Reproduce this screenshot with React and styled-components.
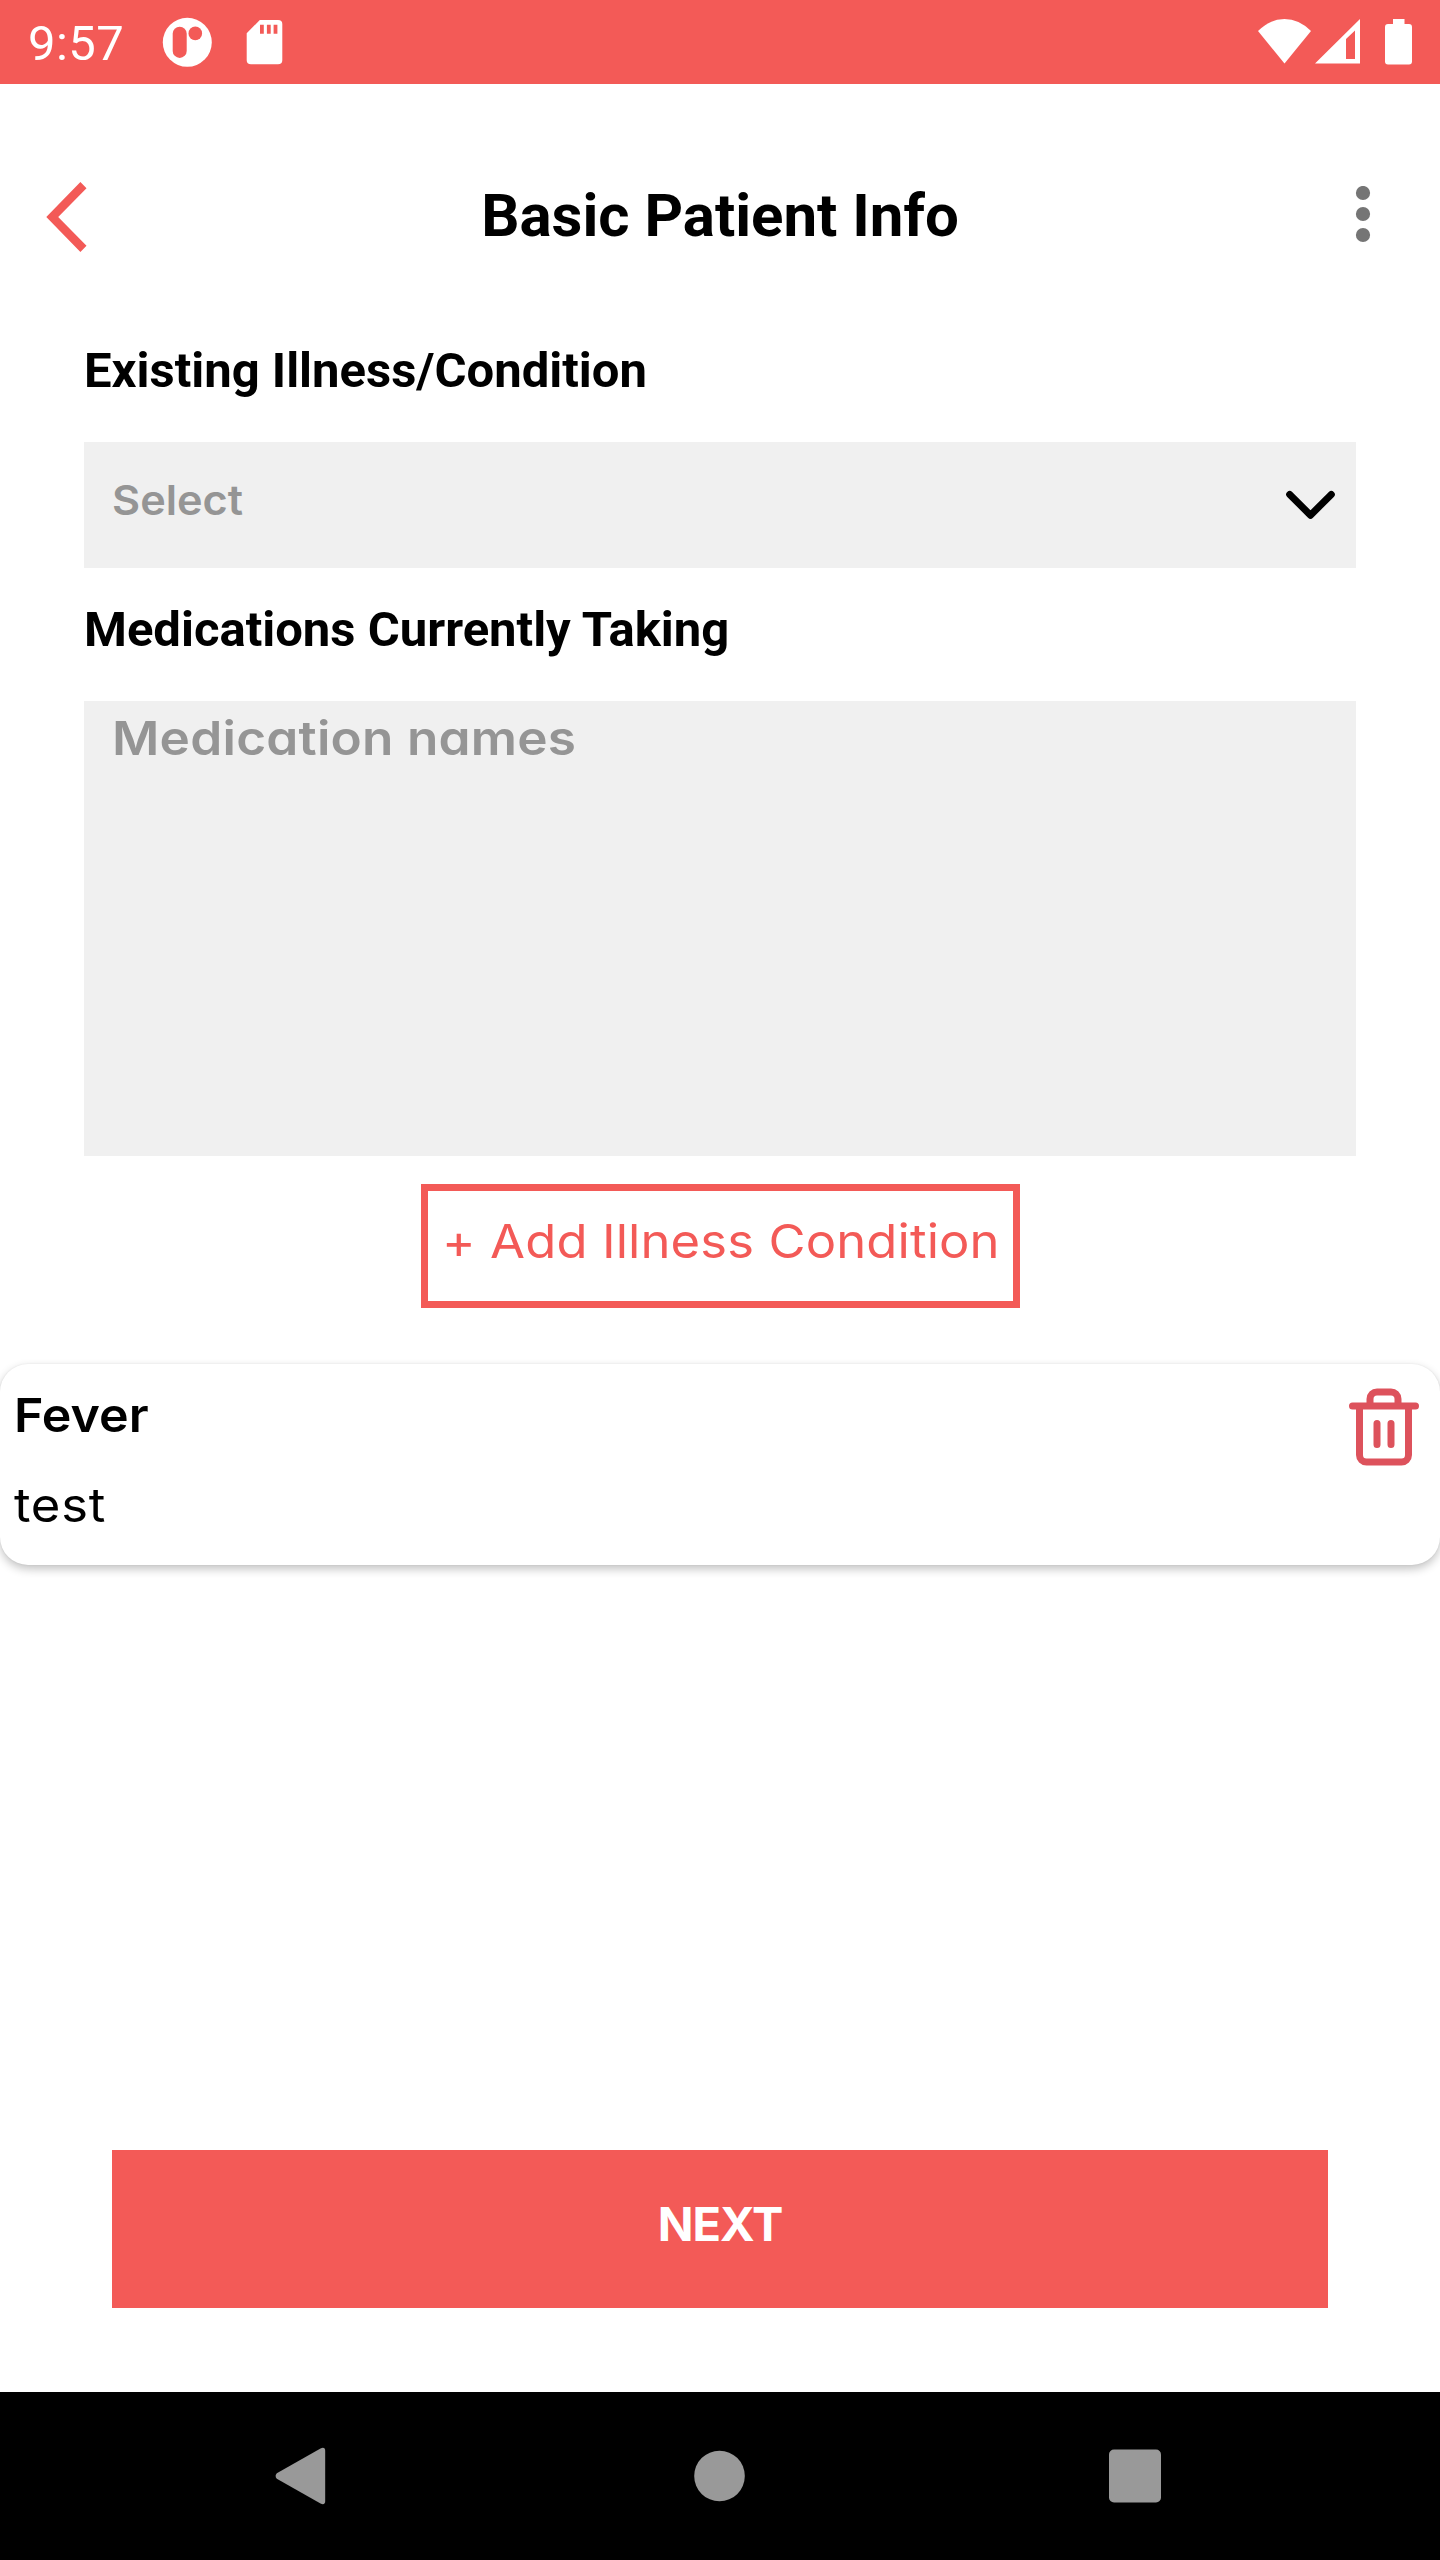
import React from "react";
import styled, { createGlobalStyle } from "styled-components";

const coral = "#f35a57";

const GlobalStyle = createGlobalStyle`
  *, *::before, *::after { box-sizing: border-box; }
  body { margin: 0; background: #fff; }
  button { font: inherit; color: inherit; background: none; border: 0; padding: 0; margin: 0; border-radius: 0; }
  svg { display: block; flex: none; }
`;

const Screen = styled.div`
  width: 1440px;
  height: 2560px;
  display: flex;
  flex-direction: column;
  overflow: hidden;
  background: #fff;
  color: #000;
  font-family: Inter, "Noto Sans", sans-serif;
  font-feature-settings: "cv11";
`;

const StatusBar = styled.div`
  height: 84px;
  flex: none;
  display: flex;
  justify-content: space-between;
  padding: 0 28px;
  background: ${coral};
  color: #fff;
`;

const StatusGroup = styled.div`
  display: flex;
`;

const Clock = styled.span`
  width: 134px;
  font: 400 49px/88px Roboto, sans-serif;
  letter-spacing: 0.4px;
`;

const StatusIcon = styled.svg`
  height: 84px;
  width: ${(p) => p.$width}px;
  margin-left: ${(p) => p.$gap || 0}px;
  fill: #fff;
`;

const Header = styled.header`
  height: 225px;
  flex: none;
  display: grid;
  grid-template-columns: 1fr auto 1fr;
  align-items: center;
  padding: 37px 69px 0 46px;
`;

const Title = styled.h1`
  margin: 2px 0 0 23px;
  font: 700 60px/72px Roboto, sans-serif;
`;

const MenuButton = styled.button`
  justify-self: end;
`;

const Form = styled.main`
  display: flex;
  flex-direction: column;
  padding: 0 84px;
`;

const Label = styled.label`
  padding: 29px 0 39px;
  font: 700 49px/65px Roboto, sans-serif;
`;

/* Widens the letterforms without changing their height. */
const WideText = styled.span`
  display: inline-block;
  transform: scaleX(${(p) => p.$stretch || 1.08});
  transform-origin: left center;
  letter-spacing: ${(p) => p.$spacing || 0}px;
  white-space: nowrap;
`;

const SelectField = styled.div`
  height: 126px;
  display: flex;
  justify-content: space-between;
  align-items: center;
  padding: 0 20px 0 28px;
  background: #f0f0f0;
`;

const SelectText = styled.span`
  padding-bottom: 10px;
  color: #959595;
  font-size: 41px;
  font-weight: 600;
  line-height: 60px;
`;

const TextArea = styled.div`
  height: 455px;
  padding: 2px 28px;
  background: #f0f0f0;
  color: #959595;
  font-size: 47px;
  font-weight: 600;
  line-height: 70px;
`;

const AddButton = styled.button`
  align-self: center;
  width: 599px;
  height: 124px;
  margin-top: 28px;
  padding: 0 0 10px 14px;
  border: 7px solid ${coral};
  color: ${coral};
  font-size: 47px;
  font-weight: 400;
  line-height: 100px;
  text-align: left;
  white-space: nowrap;
`;

const ConditionCard = styled.section`
  height: 201px;
  flex: none;
  display: flex;
  justify-content: space-between;
  align-items: flex-start;
  margin-top: 56px;
  padding: 14px;
  border-radius: 28px;
  background: #fff;
  box-shadow: 0 4px 10px rgba(0, 0, 0, 0.24), 0 0 2px rgba(0, 0, 0, 0.08);
`;

const ConditionText = styled.div`
  display: flex;
  flex-direction: column;
  gap: 16px;
`;

const ConditionLine = styled.span`
  font-size: 47px;
  font-weight: ${(p) => (p.$strong ? 600 : 400)};
  line-height: 74px;
`;

const DeleteButton = styled.button`
  padding-top: 7px;
`;

const NextButton = styled.button`
  height: 158px;
  flex: none;
  margin: auto 112px 84px;
  padding-bottom: 12px;
  background: ${coral};
  color: #fff;
  font-size: 47px;
  font-weight: 650;
  letter-spacing: -1px;
`;

const NavBar = styled.nav`
  height: 168px;
  flex: none;
  display: flex;
  justify-content: space-between;
  align-items: center;
  padding: 0 279px 0 275px;
  background: #000;
`;

function StatusIcons() {
  return (
    <StatusGroup>
      <StatusIcon $width={54} viewBox="1258 0 54 84">
        <path d="M1258 31Q1270 19 1284.5 19Q1299 19 1311 31L1284.5 63.5Z" />
      </StatusIcon>
      <StatusIcon $width={46} $gap={3} viewBox="1315 0 46 84">
        <path fillRule="evenodd" d="M1315 63.5L1360 19V63.5ZM1346 39V59H1355V30.5Z" />
      </StatusIcon>
      <StatusIcon $width={27} $gap={24} viewBox="1385 0 27 84">
        <path d="M1393 19H1404.5V24H1409Q1412 24 1412 27V61.5Q1412 64.5 1409 64.5H1388Q1385 64.5 1385 61.5V27Q1385 24 1388 24H1393Z" />
      </StatusIcon>
    </StatusGroup>
  );
}

export default function App() {
  return (
    <Screen>
      <GlobalStyle />
      <StatusBar>
        <StatusGroup>
          <Clock>9:57</Clock>
          <StatusIcon $width={50} viewBox="162 0 50 84">
            <circle cx="187.3" cy="42.3" r="24.5" />
            <rect x="172.7" y="26.7" width="14" height="31.2" rx="7" fill={coral} />
            <circle cx="195.3" cy="33.4" r="6.8" fill={coral} />
          </StatusIcon>
          <StatusIcon $width={37} $gap={34} viewBox="246 0 37 84">
            <path
              fillRule="evenodd"
              d="M259.8 20H278Q282.3 20 282.3 24V60.3Q282.3 64.3 278 64.3H251Q246.7 64.3 246.7 60.3V33.3ZM260 24.7V33.7H263.8V24.7ZM266.9 24.7V33.7H270.7V24.7ZM273.6 24.7V33.7H277.4V24.7Z"
            />
          </StatusIcon>
        </StatusGroup>
        <StatusIcons />
      </StatusBar>

      <Header>
        <button aria-label="Back">
          <svg width="42" height="70" viewBox="46 180 42 70" overflow="visible">
            <path d="M80.4 182L86.5 188.3L58.2 217L86.5 245.7L80.4 252L46.3 217Z" fill={coral} />
          </svg>
        </button>
        <Title>Basic Patient Info</Title>
        <MenuButton aria-label="Menu">
          <svg width="16" height="58" viewBox="1355 186 16 58" fill="#757575">
            <circle cx="1363" cy="193" r="7.1" />
            <circle cx="1363" cy="214" r="7.1" />
            <circle cx="1363" cy="235" r="7.1" />
          </svg>
        </MenuButton>
      </Header>

      <Form>
        <Label>Existing Illness/Condition</Label>
        <SelectField>
          <SelectText>
            <WideText $stretch={1.055}>Select</WideText>
          </SelectText>
          <svg width="50" height="30" viewBox="1286 490 50 30" fill="none">
            <path
              d="M1289.7 494.5L1310.5 515.2L1331.3 494.5"
              stroke="#000"
              strokeWidth="7"
              strokeLinecap="round"
              strokeLinejoin="round"
            />
          </svg>
        </SelectField>
        <Label>Medications Currently Taking</Label>
        <TextArea>
          <WideText $stretch={1.093} $spacing={0.2}>Medication names</WideText>
        </TextArea>
        <AddButton>
          <WideText $spacing={0.1}>+ Add Illness Condition</WideText>
        </AddButton>
      </Form>

      <ConditionCard>
        <ConditionText>
          <ConditionLine $strong>
            <WideText $stretch={1.067}>Fever</WideText>
          </ConditionLine>
          <ConditionLine>
            <WideText $spacing={0.7}>test</WideText>
          </ConditionLine>
        </ConditionText>
        <DeleteButton aria-label="Delete">
          <svg
            width="84"
            height="84"
            viewBox="0 0 24 24"
            fill="none"
            stroke="#dd525c"
            strokeWidth="2"
            strokeLinecap="round"
            strokeLinejoin="round"
          >
            <path d="M3 6h18M19 6v14a2 2 0 0 1-2 2H7a2 2 0 0 1-2-2V6M8 6V4a2 2 0 0 1 2-2h4a2 2 0 0 1 2 2v2M10 11v6M14 11v6" />
          </svg>
        </DeleteButton>
      </ConditionCard>

      <NextButton>NEXT</NextButton>

      <NavBar>
        <svg width="51" height="58" viewBox="275 2447 51 58" fill="#999">
          <path d="M276.8 2473.2L320.5 2448.4Q325.2 2446.5 325.2 2451V2501Q325.2 2505.5 320.5 2503.6L276.8 2478.8Q274.4 2476 276.8 2473.2Z" />
        </svg>
        <svg width="55" height="52" viewBox="-1.5 0 55 52" fill="#999">
          <circle cx="28" cy="26" r="25.3" />
        </svg>
        <svg width="52" height="54" viewBox="0 0 52 54" fill="#999">
          <rect y="0.5" width="52" height="53" rx="5" />
        </svg>
      </NavBar>
    </Screen>
  );
}
